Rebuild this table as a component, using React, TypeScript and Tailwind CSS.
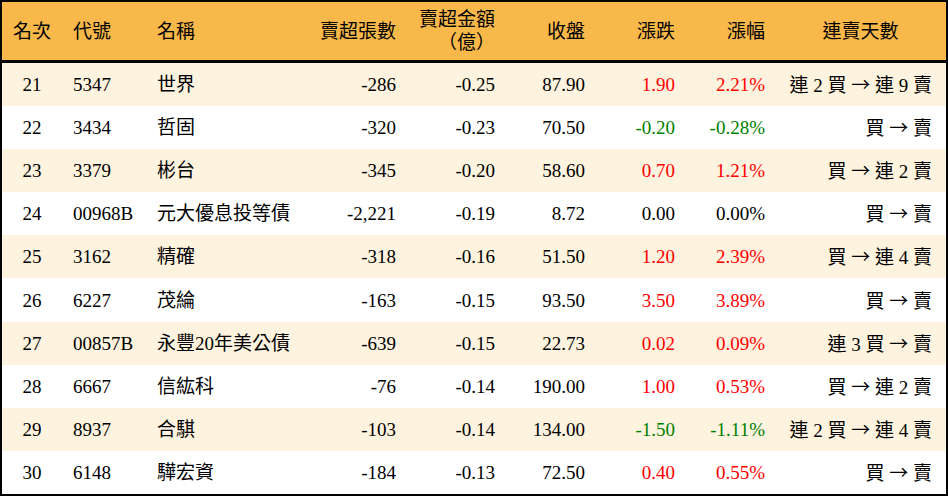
const rows = [
  { rank: 21, code: "5347", name: "世界", vol: "-286", amt: "-0.25", close: "87.90", chg: "1.90", pct: "2.21%", streak: "連 2 買 → 連 9 賣" },
  { rank: 22, code: "3434", name: "哲固", vol: "-320", amt: "-0.23", close: "70.50", chg: "-0.20", pct: "-0.28%", streak: "買 → 賣" },
  { rank: 23, code: "3379", name: "彬台", vol: "-345", amt: "-0.20", close: "58.60", chg: "0.70", pct: "1.21%", streak: "買 → 連 2 賣" },
  { rank: 24, code: "00968B", name: "元大優息投等債", vol: "-2,221", amt: "-0.19", close: "8.72", chg: "0.00", pct: "0.00%", streak: "買 → 賣" },
  { rank: 25, code: "3162", name: "精確", vol: "-318", amt: "-0.16", close: "51.50", chg: "1.20", pct: "2.39%", streak: "買 → 連 4 賣" },
  { rank: 26, code: "6227", name: "茂綸", vol: "-163", amt: "-0.15", close: "93.50", chg: "3.50", pct: "3.89%", streak: "買 → 賣" },
  { rank: 27, code: "00857B", name: "永豐20年美公債", vol: "-639", amt: "-0.15", close: "22.73", chg: "0.02", pct: "0.09%", streak: "連 3 買 → 賣" },
  { rank: 28, code: "6667", name: "信紘科", vol: "-76", amt: "-0.14", close: "190.00", chg: "1.00", pct: "0.53%", streak: "買 → 連 2 賣" },
  { rank: 29, code: "8937", name: "合騏", vol: "-103", amt: "-0.14", close: "134.00", chg: "-1.50", pct: "-1.11%", streak: "連 2 買 → 連 4 賣" },
  { rank: 30, code: "6148", name: "驊宏資", vol: "-184", amt: "-0.13", close: "72.50", chg: "0.40", pct: "0.55%", streak: "買 → 賣" },
];

const cols = "grid grid-cols-[60px_83px_160px_101px_99px_90px_90px_90px_171px]";

// 漲紅跌綠, 平盤黑
function tone(v: string) {
  if (v.startsWith("-")) return "text-[#008000]";
  if (parseFloat(v) === 0) return "text-black";
  return "text-[#ff0000]";
}

function Streak({ text }: { text: string }) {
  const [from, to] = text.split(" → ");
  return (
    <>
      {from}{" "}
      <span style={{ fontFamily: '"Noto Sans CJK TC", sans-serif' }}>→</span>{" "}
      {to}
    </>
  );
}

export default function App() {
  return (
    <div
      className="w-[948px] h-[496px] bg-white border-2 border-black text-black text-[19px] leading-[23px]"
      style={{ fontFamily: '"Liberation Serif", "Noto Sans CJK TC", serif' }}
    >
      <div className={`${cols} h-[58px] bg-[#f9b84a] border-b-[3px] border-black items-center box-content`}>
        <div className="text-center">名次</div>
        <div className="pl-[11px]">代號</div>
        <div className="pl-[12px]">名稱</div>
        <div className="text-right pr-[10px]">賣超張數</div>
        <div className="text-right pr-[10px]">
          賣超金額
          <br />
          （億）
        </div>
        <div className="text-right pr-[10px]">收盤</div>
        <div className="text-right pr-[10px]">漲跌</div>
        <div className="text-right pr-[10px]">漲幅</div>
        <div className="text-center">連賣天數</div>
      </div>

      {rows.map((r, i) => (
        <div
          key={r.rank}
          className={`${cols} h-[43.1px] items-center ${i % 2 === 0 ? "bg-[#fef3de]" : "bg-white"}`}
        >
          <div className="text-center">{r.rank}</div>
          <div className="pl-[11px]">{r.code}</div>
          <div className="pl-[12px] whitespace-nowrap">{r.name}</div>
          <div className="text-right pr-[10px]">{r.vol}</div>
          <div className="text-right pr-[10px]">{r.amt}</div>
          <div className="text-right pr-[10px]">{r.close}</div>
          <div className={`text-right pr-[10px] ${tone(r.chg)}`}>{r.chg}</div>
          <div className={`text-right pr-[10px] ${tone(r.pct)}`}>{r.pct}</div>
          <div className="text-right pr-[14px] whitespace-nowrap">
            <Streak text={r.streak} />
          </div>
        </div>
      ))}
    </div>
  );
}
